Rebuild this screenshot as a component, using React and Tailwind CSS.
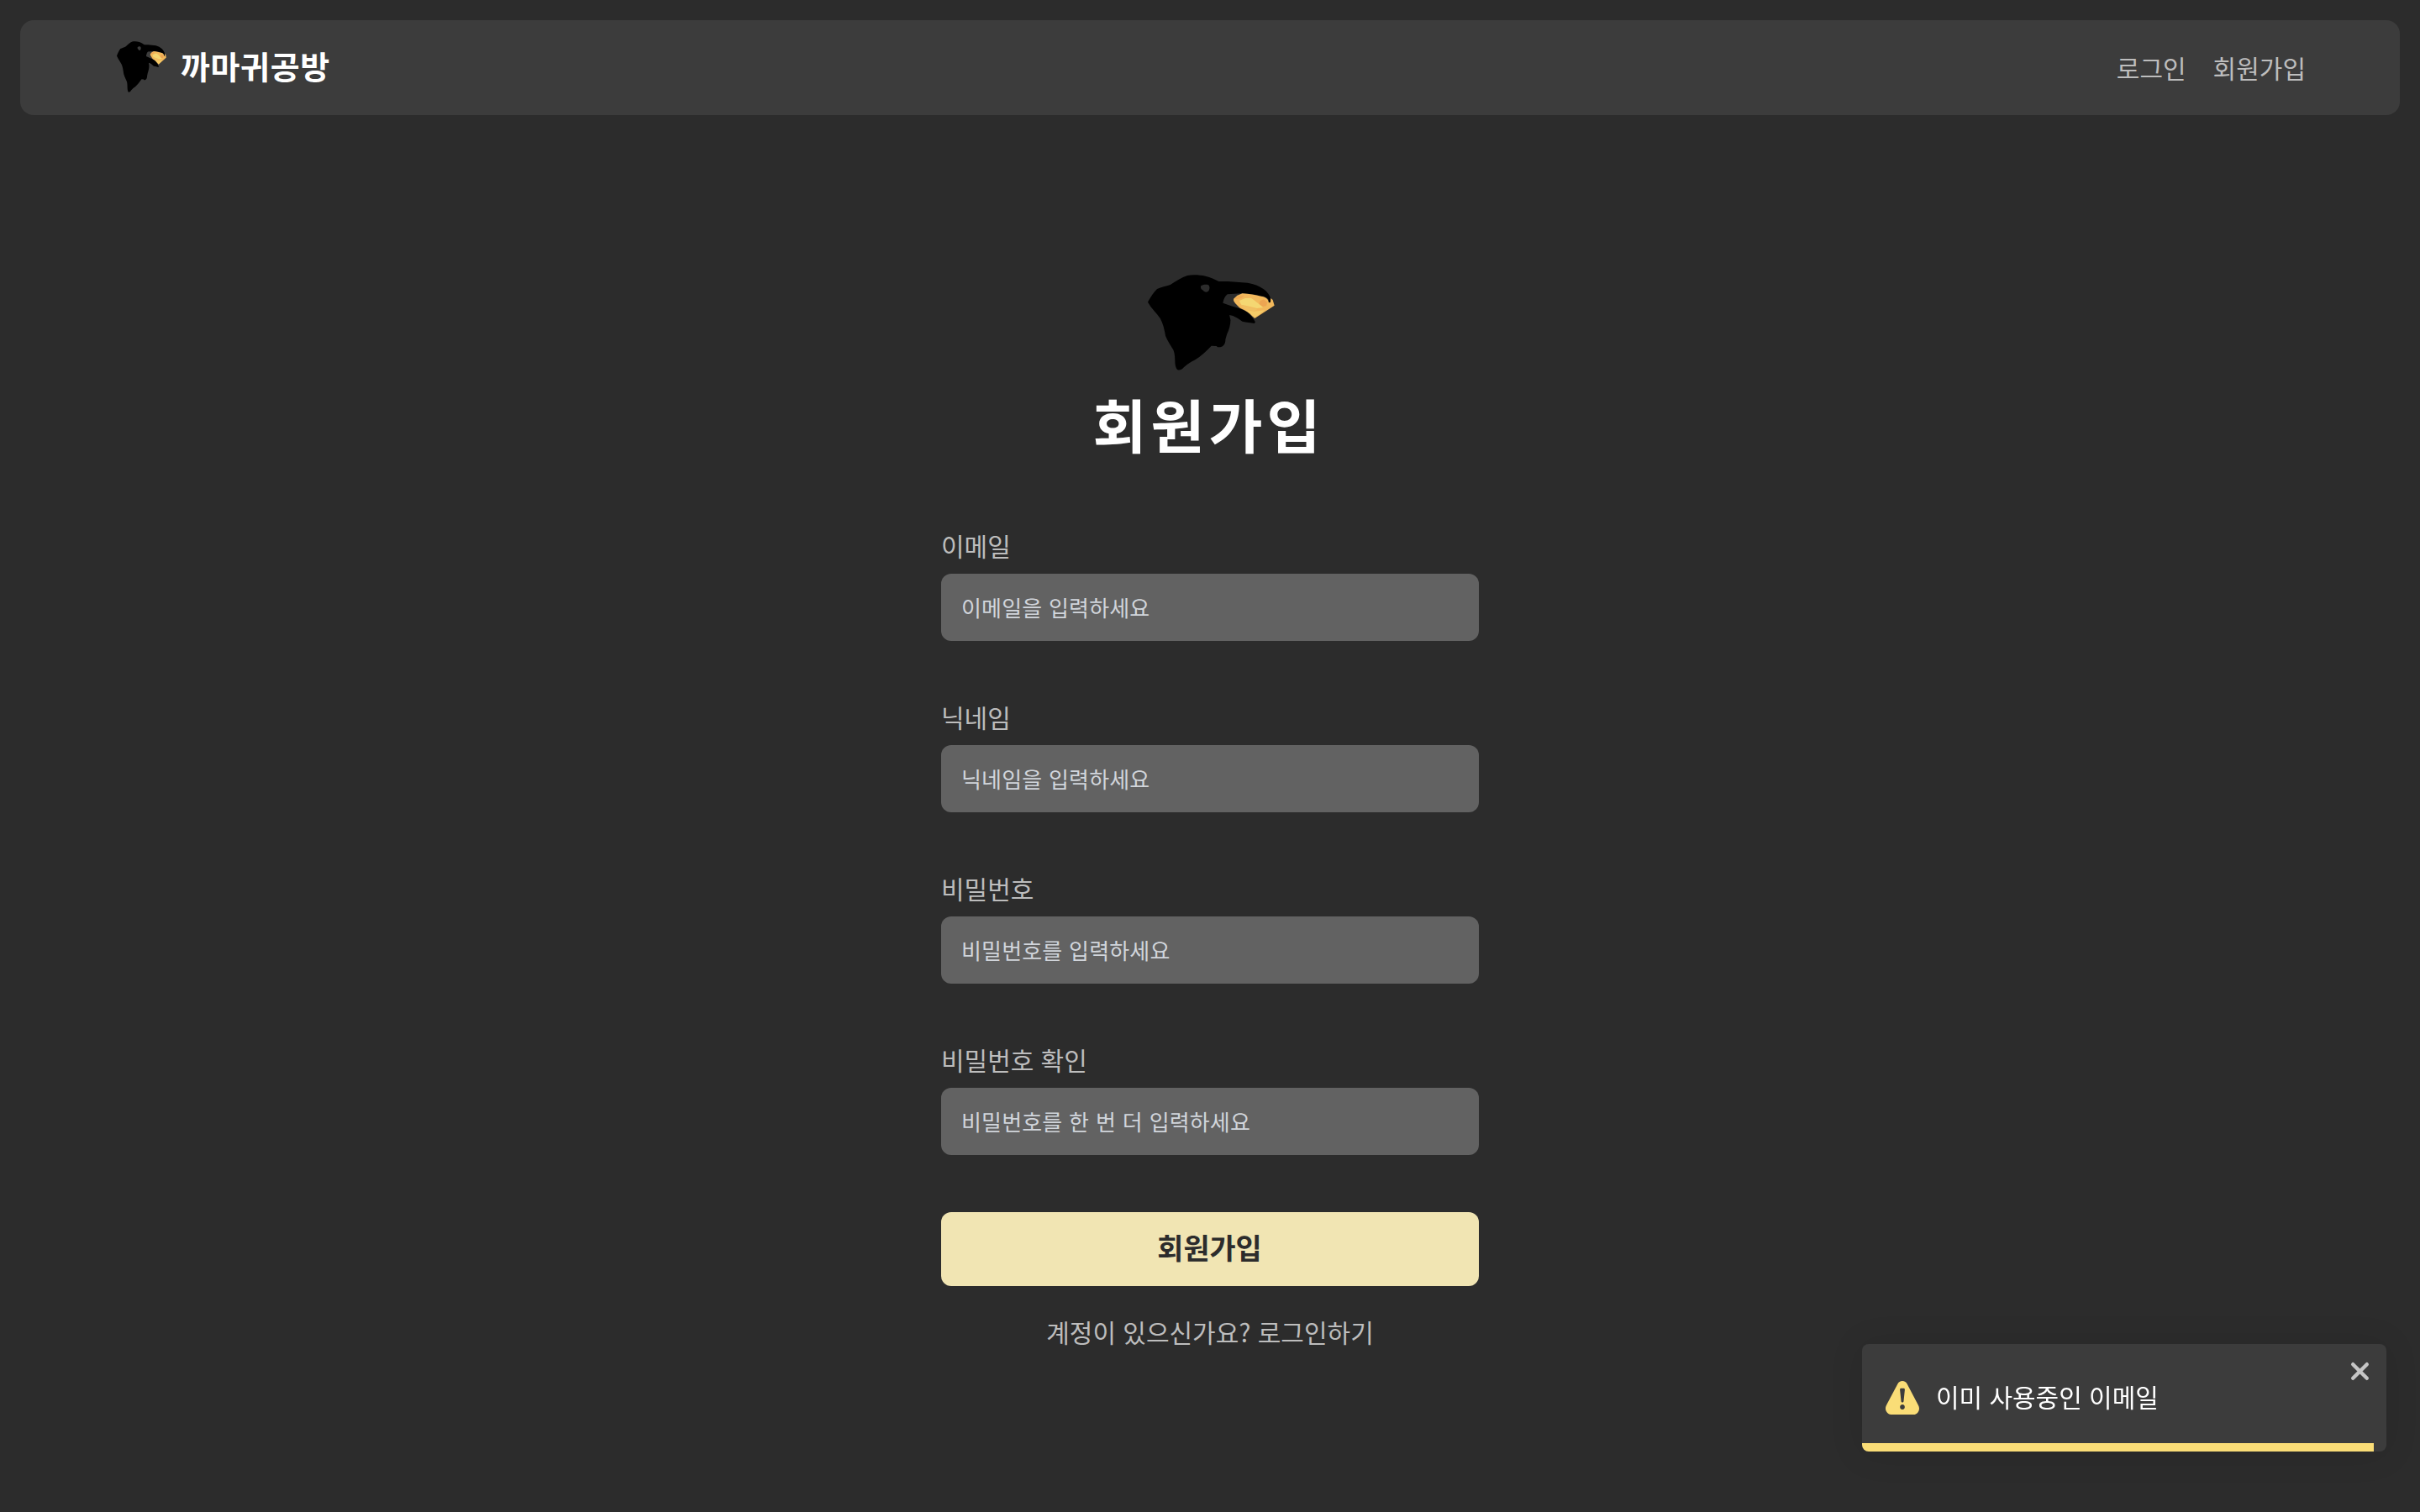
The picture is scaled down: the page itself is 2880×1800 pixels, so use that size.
const FIELDS = [
  { label: '이메일', placeholder: '이메일을 입력하세요', type: 'email' },
  { label: '닉네임', placeholder: '닉네임을 입력하세요', type: 'text' },
  { label: '비밀번호', placeholder: '비밀번호를 입력하세요', type: 'password' },
  { label: '비밀번호 확인', placeholder: '비밀번호를 한 번 더 입력하세요', type: 'password' },
];

function CrowLogo({ className }) {
  return (
    <svg className={className} viewBox="78 51 451 342" preserveAspectRatio="none" aria-hidden="true">
      <path
        fillRule="evenodd"
        d="M78 149 C86 135 98 114 111 102 C126 95 143 93 158 87 C178 74 198 61 219 54 C240 50 262 52 283 56 C301 60 316 68 330 75 L362 75 L433 80 C455 84 474 91 490 103 C503 113 512 125 515 139 L514 148 L509 151 L506 138 C498 130 487 127 474 126 C452 120 430 119 410 118 L361 121 C352 127 347 140 345 152 C364 159 385 166 405 172 C420 177 432 184 441 194 C449 202 455 210 460 220 L457 225 C444 222 429 221 414 218 C401 209 385 197 368 195 L372 213 C372 231 366 250 359 264 L354 282 C354 297 348 307 336 310 L326 310 L322 306 L304 305 C287 322 268 342 244 356 C232 362 219 369 206 382 C199 390 192 393 184 391 C178 386 176 377 175 368 C174 351 175 334 169 320 C159 304 147 286 141 270 C137 246 132 226 122 207 C109 187 90 171 78 149 Z M267 91 C264 98 268 103 273 106 C279 114 290 116 295 107 C299 99 298 90 292 87 C284 85 272 86 267 91 Z"
        fill="#000"
      />
      <path
        d="M383 137 L396 125 L414 118 C437 120 462 123 480 128 C492 129 501 134 505 141 L508 151 L514 150 L515 135 L522 141 L528 161 L458 207 L450 200 C440 188 425 179 407 171 C397 163 386 151 383 144 Z"
        fill="#f2b85b"
      />
      <path d="M403 144 L424 135 L446 134 L478 160 L488 168 L466 171 L438 164 L410 158 Z" fill="#f4d772" />
      <path d="M425 177 L456 182 L494 178 L459 204 L448 196 Z" fill="#f5cb68" />
      <path d="M477 145 L490 139 L503 150 L499 163 L486 165 L474 155 Z" fill="#eda552" />
      <path d="M387 136 L401 126 L421 125 L412 134 L395 139 Z" fill="#f0ab54" />
      <path d="M443 128 L475 132 L468 145 L447 136 Z" fill="#f0b95e" />
      <path d="M405 158 L433 165 L468 174 L457 181 L425 176 Z" fill="#f0c062" />
    </svg>
  );
}

function Header() {
  return (
    <header className="flex h-[113px] shrink-0 items-center justify-between rounded-2xl bg-[#3c3c3c] pr-[112px] pl-[115px]">
      <a className="flex items-center">
        <CrowLogo className="mb-[2px] h-[61px] w-[59px]" />
        <span className="ml-[17px] pb-[5px] text-[38px] leading-[56px] font-bold tracking-[0.6px] text-white">까마귀공방</span>
      </a>
      <nav className="flex gap-8 pb-px text-[30px] leading-[45px] text-[#bdbdbd]">
        <a>로그인</a>
        <a>회원가입</a>
      </nav>
    </header>
  );
}

function Field({ label, placeholder, type }) {
  return (
    <label className="flex flex-col">
      <span className="mb-[12px] text-[30px] leading-[43px] text-[#bdbdbd]">{label}</span>
      <input
        type={type}
        placeholder={placeholder}
        className="h-20 rounded-xl bg-[#626262] px-6 pb-[2px] text-[26px] tracking-[0.15px] text-white [word-spacing:1.8px] placeholder:text-[#d1d5db]"
      />
    </label>
  );
}

function Toast() {
  return (
    <div className="fixed right-10 bottom-[72px] h-32 w-[624px] overflow-hidden rounded-lg bg-[#3c3c3c] shadow-[0_2px_40px_rgba(0,0,0,0.1)]">
      <div className="flex h-full items-center pl-7">
        <svg className="size-10 shrink-0" viewBox="0 0 24 24" fill="#fadd77">
          <path d="M23.32 17.191L15.438 2.184C14.728.833 13.416 0 11.996 0c-1.42 0-2.733.833-3.443 2.184L.533 17.448a4.744 4.744 0 000 4.368C1.243 23.167 2.555 24 3.975 24h16.05C22.22 24 24 22.044 24 19.632c0-.904-.251-1.746-.68-2.44zm-9.622 1.46c0 1.033-.724 1.823-1.698 1.823s-1.698-.79-1.698-1.822v-.043c0-1.028.724-1.822 1.698-1.822s1.698.79 1.698 1.822v.043zm.039-12.285l-.84 8.06c-.057.581-.408.943-.897.943-.49 0-.84-.367-.896-.942l-.84-8.065c-.057-.624.25-1.095.779-1.095h1.91c.528.005.84.476.784 1.1z" />
        </svg>
        <p className="ml-5 pb-[4px] text-[30px] leading-[45px] text-white">이미 사용중인 이메일</p>
      </div>
      <button className="absolute top-4 right-4" aria-label="close">
        <svg className="h-8 w-7" viewBox="0 0 14 16" fill="none" stroke="#c5c5c5" strokeWidth="2.2" strokeLinecap="round">
          <path d="M2.1 4.1 L10.4 12.4 M10.4 4.1 L2.1 12.4" />
        </svg>
      </button>
      <div className="absolute bottom-0 left-0 h-[10px] w-[609.4px] bg-[#fadd77]" />
    </div>
  );
}

export default function App() {
  return (
    <div className="flex h-[1800px] w-[2880px] flex-col bg-[#2c2c2c] p-6 font-['Noto_Sans_CJK_KR',sans-serif] [word-spacing:1.5px]">
      <Header />
      <main className="mx-auto flex w-[640px] flex-col items-center pt-[190px]">
        <CrowLogo className="ml-[3px] h-[114px] w-[151px]" />
        <h1 className="mt-[13px] mr-[3px] text-[69.5px] leading-[100px] font-bold tracking-[5px] text-white">회원가입</h1>
        <form className="mt-[74px] flex w-full flex-col">
          <div className="flex flex-col gap-[69px]">
            {FIELDS.map((f) => (
              <Field key={f.label} {...f} />
            ))}
          </div>
          <button type="button" className="mt-[68px] h-[88px] rounded-xl bg-[#f1e5b3] pr-px pb-1 text-[33.8px] font-bold text-[#2c2c2c]">
            회원가입
          </button>
        </form>
        <a className="mt-[32px] text-[30px] leading-[45px] text-[#bdbdbd]">계정이 있으신가요? 로그인하기</a>
      </main>
      <Toast />
    </div>
  );
}
